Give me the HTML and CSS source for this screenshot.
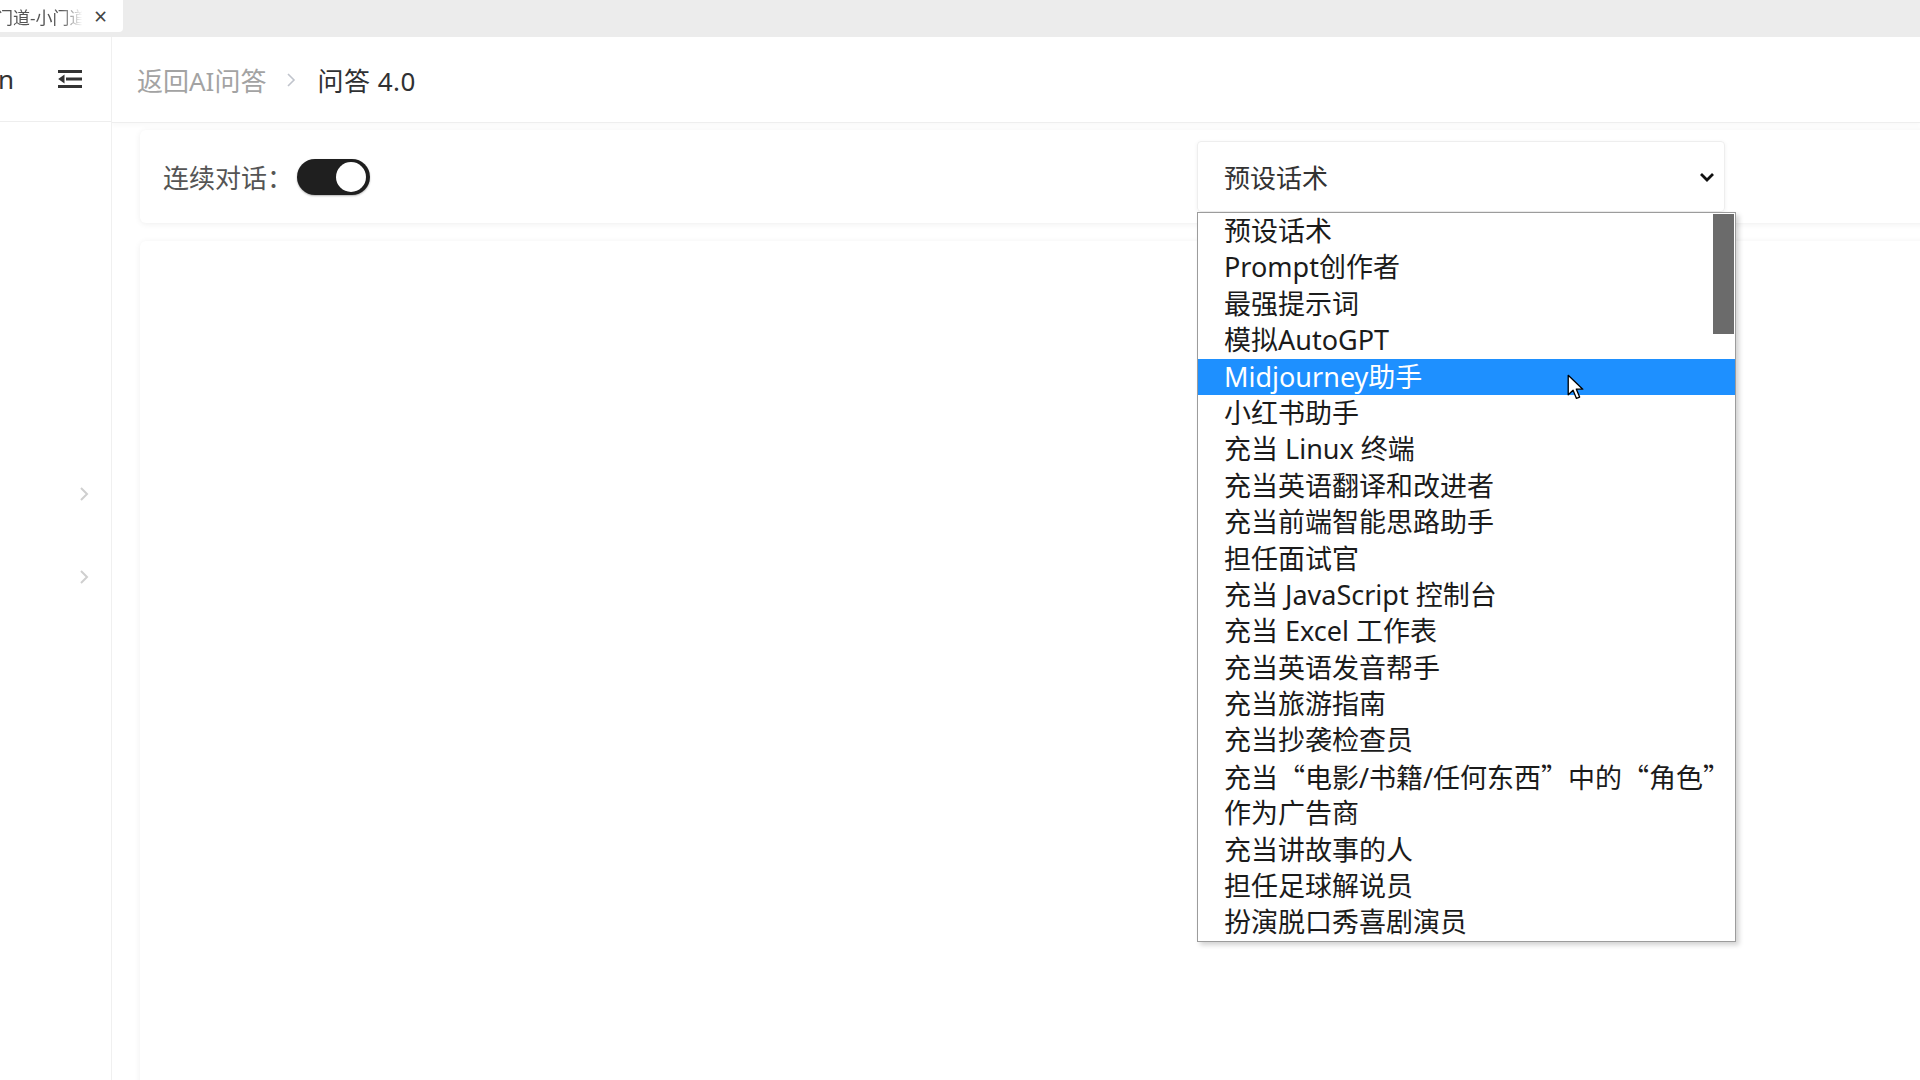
FILE: index.html
```html
<!DOCTYPE html>
<html lang="zh-CN">
<head>
<meta charset="UTF-8">
<meta name="viewport" content="width=device-width, initial-scale=1.0">
<title>问答 4.0</title>
<link rel="stylesheet" href="styles.css">
</head>
<body>
<div class="tab-bar">
    <div class="tab">
        <span class="tab-title">门道-小门道</span>
        <span class="tab-close">×</span>
    </div>
</div>

<div class="app">
    <div class="sidebar">
        <div class="logo-row">
            <span class="logo">n</span>
            <svg class="fold-icon" width="26" height="20" viewBox="0 0 26 20">
                <path d="M1 2.5H25M9 10H25M1 17.5H25" stroke="#333" stroke-width="2.8" fill="none"/>
                <path d="M7.5 5.5L1.2 10L7.5 14.5Z" fill="#333"/>
            </svg>
        </div>
        <div class="menu">
            <div class="menu-item">
                <svg width="10" height="16" viewBox="0 0 10 16"><path d="M2 2L8 8L2 14" stroke="#cfcfcf" stroke-width="2" fill="none"/></svg>
            </div>
            <div class="menu-item">
                <svg width="10" height="16" viewBox="0 0 10 16"><path d="M2 2L8 8L2 14" stroke="#cfcfcf" stroke-width="2" fill="none"/></svg>
            </div>
        </div>
    </div>

    <div class="main">
        <div class="header">
            <span class="crumb">返回AI问答</span>
            <svg class="crumb-sep" width="10" height="16" viewBox="0 0 10 16"><path d="M2 2L8 8L2 14" stroke="#c0c4cc" stroke-width="1.6" fill="none"/></svg>
            <span class="crumb current">问答 4.0</span>
        </div>

        <div class="content">
            <div class="card settings">
                <span class="label">连续对话：</span>
                <div class="switch on"><span class="knob"></span></div>

                <div class="select-wrap">
                    <div class="select">
                        <span>预设话术</span>
                        <svg width="16" height="12" viewBox="0 0 16 12"><path d="M2 3L8 9L14 3" stroke="#111" stroke-width="2.8" fill="none"/></svg>
                    </div>
                    <div class="dropdown">
                        <div class="option">预设话术</div>
                        <div class="option">Prompt创作者</div>
                        <div class="option">最强提示词</div>
                        <div class="option">模拟AutoGPT</div>
                        <div class="option selected">Midjourney助手</div>
                        <div class="option">小红书助手</div>
                        <div class="option">充当 Linux 终端</div>
                        <div class="option">充当英语翻译和改进者</div>
                        <div class="option">充当前端智能思路助手</div>
                        <div class="option">担任面试官</div>
                        <div class="option">充当 JavaScript 控制台</div>
                        <div class="option">充当 Excel 工作表</div>
                        <div class="option">充当英语发音帮手</div>
                        <div class="option">充当旅游指南</div>
                        <div class="option">充当抄袭检查员</div>
                        <div class="option">充当<span class="quote">“</span>电影/书籍/任何东西<span class="quote">”</span>中的<span class="quote">“</span>角色<span class="quote">”</span></div>
                        <div class="option">作为广告商</div>
                        <div class="option">充当讲故事的人</div>
                        <div class="option">担任足球解说员</div>
                        <div class="option">扮演脱口秀喜剧演员</div>
                        <div class="scroll-thumb"></div>
                    </div>
                </div>
            </div>

            <div class="card chat"></div>
        </div>
    </div>
</div>

<svg class="cursor" width="17" height="27" viewBox="0 0 14 22">
    <path d="M1 1V17L5 13.2L7.8 20L10.4 18.9L7.7 12.4H13Z" fill="#fff" stroke="#000" stroke-width="1.1" stroke-linejoin="round"/>
</svg>
</body>
</html>
```

FILE: styles.css
```css
body {
    margin: 0;
    padding: 0;
    width: 1920px;
    height: 1080px;
    overflow: hidden;
    position: relative;
    background-color: #fff;
    font-family: "Noto Sans", "Noto Sans CJK SC", sans-serif;
    color: #333;
}

/* browser tab strip */
.tab-bar {
    height: 37px;
    background-color: #ececec;
}

.tab {
    width: 123px;
    height: 32px;
    background-color: #fff;
    border-bottom-right-radius: 4px;
    display: flex;
    align-items: center;
}

.tab-title {
    margin-left: -4px;
    width: 90px;
    white-space: nowrap;
    font-size: 17px;
    color: #555;
    -webkit-mask-image: linear-gradient(to right, #000 72%, transparent 96%);
    mask-image: linear-gradient(to right, #000 72%, transparent 96%);
}

.tab-close {
    margin-left: 8px;
    font-size: 23px;
    line-height: 1;
    color: #444;
}

.app {
    display: flex;
    height: 1043px;
}

/* sidebar */
.sidebar {
    width: 111px;
    border-right: 1px solid #f0f0f0;
    flex-shrink: 0;
}

.logo-row {
    height: 85px;
    box-sizing: border-box;
    border-bottom: 1px solid #eeeeee;
    display: flex;
    align-items: center;
}

.logo {
    margin-left: -2px;
    font-size: 26px;
    color: #333;
}

.fold-icon {
    margin-left: 43px;
}

.menu {
    padding-top: 330px;
}

.menu-item {
    height: 83px;
    display: flex;
    align-items: center;
    justify-content: flex-end;
    padding-right: 22px;
}

/* main area */
.main {
    flex: 1;
    overflow: hidden;
}

.header {
    height: 86px;
    box-sizing: border-box;
    border-bottom: 1px solid #eeeeee;
    box-shadow: 0 3px 4px rgba(0, 0, 0, 0.025);
    display: flex;
    align-items: center;
    padding-left: 25px;
}

.crumb {
    font-size: 26px;
    color: #a3a3a3;
}

.crumb.current {
    color: #303133;
    letter-spacing: 0.5px;
}

.crumb-sep {
    margin: 0 21px 0 20px;
}

.content {
    padding: 7px 0 0 28px;
}

.card {
    margin-right: -20px;
    background-color: #fff;
    border-radius: 6px;
    box-shadow: 0 1px 6px rgba(0, 0, 0, 0.07);
}

.settings {
    height: 93px;
    display: flex;
    align-items: center;
    padding-left: 23px;
}

.label {
    font-size: 26px;
    color: #555;
}

.switch {
    margin-left: 4px;
    width: 73px;
    height: 36px;
    border-radius: 18px;
    background-color: #1f1f1f;
    position: relative;
    box-shadow: 0 1px 2px rgba(0, 0, 0, 0.3);
}

.switch .knob {
    position: absolute;
    top: 3px;
    right: 4px;
    width: 30px;
    height: 30px;
    border-radius: 50%;
    background-color: #fff;
}

.select-wrap {
    margin-left: auto;
    margin-right: 215px;
    width: 528px;
    position: relative;
}

.select {
    height: 71px;
    box-sizing: border-box;
    border: 1px solid #eeeeee;
    border-radius: 4px;
    box-shadow: 0 1px 4px rgba(0, 0, 0, 0.06);
    display: flex;
    align-items: center;
    justify-content: space-between;
    padding: 0 9px 0 26px;
    font-size: 26px;
    color: #333;
}

.dropdown {
    position: absolute;
    top: 71px;
    left: 0;
    width: 539px;
    box-sizing: border-box;
    border: 1px solid #9c9c9c;
    background-color: #fff;
    box-shadow: 3px 3px 5px rgba(0, 0, 0, 0.18);
    z-index: 10;
}

.option {
    height: 36.4px;
    line-height: 36.4px;
    padding-left: 26px;
    font-size: 27px;
    color: #1b1b1b;
    white-space: nowrap;
}

.option .quote {
    font-family: "Noto Sans CJK SC", sans-serif;
    font-feature-settings: "fwid" 1;
}

.option.selected {
    background-color: #1e90ff;
    color: #fff;
}

.scroll-thumb {
    position: absolute;
    top: 1px;
    right: 1px;
    width: 21px;
    height: 120px;
    background-color: #6b6b6b;
}

.chat {
    margin-top: 18px;
    height: 900px;
}

.cursor {
    position: absolute;
    left: 1567px;
    top: 374px;
    z-index: 20;
}
```
